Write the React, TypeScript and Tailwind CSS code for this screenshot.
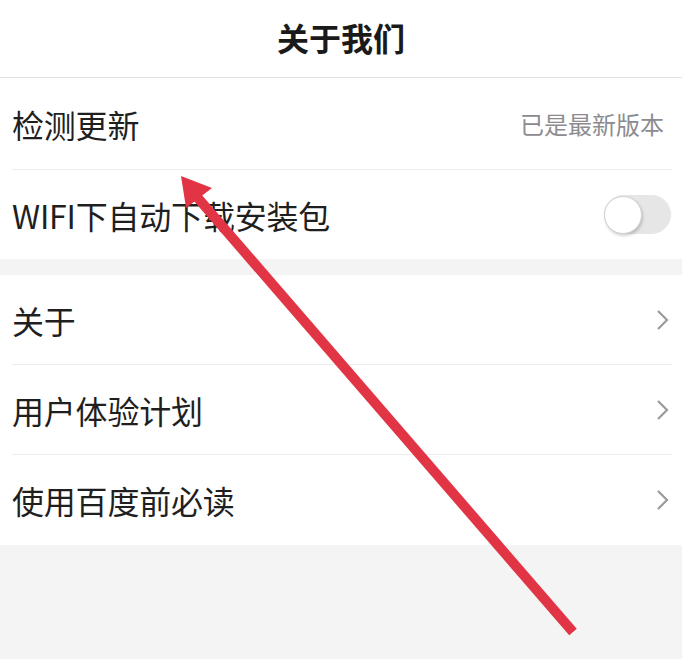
const font = {
  fontFamily: '"Noto Sans CJK SC", "Noto Sans", sans-serif',
};

function Row({
  label,
  right,
  last,
  h = "h-[90px]",
}: {
  label: string;
  right?: React.ReactNode;
  last?: boolean;
  h?: string;
}) {
  return (
    <div className="pl-3 pr-[10px]">
      <div
        className={
          h +
          " flex items-center justify-between " +
          (last ? "" : "border-b border-[#ececec]")
        }
      >
        <span className="text-[32px] text-[#1f1f1f] tracking-[-0.2px]">{label}</span>
        {right}
      </div>
    </div>
  );
}

function Toggle() {
  return (
    <div className="w-[67px] h-[39px] rounded-full bg-[#e6e6e6] flex items-center mr-[1px]">
      <div className="w-[38px] h-[38px] rounded-full bg-white border border-[#d4d4d4] shadow-[1px_2px_3px_rgba(0,0,0,0.18)]" />
    </div>
  );
}

function Chevron() {
  return (
    <svg width="14" height="22" viewBox="0 0 14 22" className="mr-[2px]">
      <path d="M2 2 L11 11 L2 20" fill="none" stroke="#9a9a9a" strokeWidth="2.2" />
    </svg>
  );
}

export default function App() {
  return (
    <div className="relative h-[659px] bg-[#f4f4f4] overflow-hidden" style={font}>
      <header className="h-[78px] bg-white border-b border-[#e2e2e2] flex items-center justify-center pb-1">
        <h1 className="text-[32px] font-bold text-[#1a1a1a]">关于我们</h1>
      </header>

      <section className="bg-white">
        <Row
          h="h-[92px]"
          label="检测更新"
          right={<span className="text-[24px] text-[#8c8c90] mr-[8px]">已是最新版本</span>}
        />
        <Row h="h-[89px]" label="WIFI下自动下载安装包" right={<Toggle />} last />
      </section>

      <div className="h-4" />

      <section className="bg-white">
        <Row label="关于" right={<Chevron />} />
        <Row label="用户体验计划" right={<Chevron />} />
        <Row label="使用百度前必读" right={<Chevron />} last />
      </section>

      {/* annotation arrow drawn over the screen */}
      <svg
        className="absolute inset-0 pointer-events-none"
        width="682"
        height="659"
        viewBox="0 0 682 659"
      >
        <line x1="573" y1="632" x2="197" y2="197" stroke="#e13545" strokeWidth="10" />
        <polygon points="181,176 212,188 186,208" fill="#e13545" />
      </svg>
    </div>
  );
}
